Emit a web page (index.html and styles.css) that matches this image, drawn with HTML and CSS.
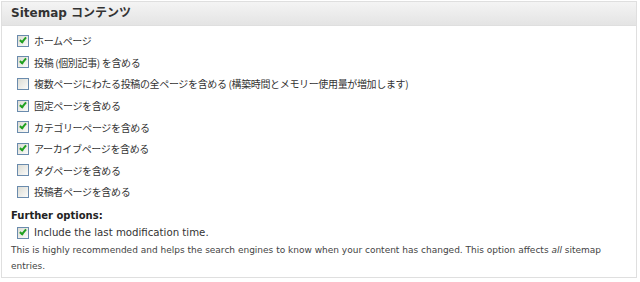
FILE: index.html
```html
<!DOCTYPE html>
<html lang="ja">
<head>
    <meta charset="UTF-8">
    <title>Sitemap コンテンツ</title>
    <link rel="stylesheet" href="styles.css">
</head>
<body>
    <div class="postbox">
        <h3 class="hndle">Sitemap コンテンツ</h3>
        <div class="inside">
            <ul class="options">
                <li><span class="cb checked"></span>ホームページ</li>
                <li><span class="cb checked"></span>投稿 (個別記事) を含める</li>
                <li><span class="cb"></span>複数ページにわたる投稿の全ページを含める (構築時間とメモリー使用量が増加します)</li>
                <li><span class="cb checked"></span>固定ページを含める</li>
                <li><span class="cb checked"></span>カテゴリーページを含める</li>
                <li><span class="cb checked"></span>アーカイブページを含める</li>
                <li><span class="cb"></span>タグページを含める</li>
                <li><span class="cb"></span>投稿者ページを含める</li>
            </ul>
            <div class="further">
                <b>Further options:</b>
                <div class="further-item"><span class="cb checked"></span>Include the last modification time.</div>
                <p class="note">This is highly recommended and helps the search engines to know when your content has changed. This option affects <i>all</i> sitemap entries.</p>
            </div>
        </div>
    </div>
</body>
</html>
```

FILE: styles.css
```css
body {
    margin: 0;
    padding: 1px 3px 0 1px;
    background: #fff;
    font-family: "DejaVu Sans", Verdana, sans-serif;
    color: #333;
}

.postbox {
    border: 1px solid #dfdfdf;
    height: 277px;
    box-sizing: border-box;
}

.hndle {
    margin: 0;
    height: 23px;
    line-height: 23px;
    padding: 0 9px;
    font-size: 12px;
    font-weight: bold;
    color: #333;
    background: linear-gradient(#f4f4f4, #e4e4e4);
    border-bottom: 1px solid #dfdfdf;
    font-family: "DejaVu Sans", "Noto Sans CJK JP", sans-serif;
}

.inside {
    padding: 0 9px;
}

.options {
    list-style: none;
    margin: 0;
    padding: 4px 0 0 6px;
}

.options li {
    height: 21.6px;
    display: flex;
    align-items: center;
    font-size: 10px;
    letter-spacing: -0.35px;
    color: #333;
    font-family: "Noto Sans CJK JP", sans-serif;
}

.cb {
    display: inline-block;
    width: 10px;
    height: 10px;
    border: 1px solid #6a8bad;
    background: linear-gradient(135deg, #dcdcd4, #fbfbfa);
    margin-right: 5px;
    flex: none;
    position: relative;
}

.cb.checked::after {
    content: "";
    position: absolute;
    left: 3px;
    top: 0px;
    width: 2px;
    height: 5px;
    border: solid #1fa01f;
    border-width: 0 2px 2px 0;
    transform: rotate(40deg);
}

.further {
    margin-top: 7px;
}

.further b {
    display: block;
    font-size: 10px;
    color: #222;
}

.further-item {
    display: flex;
    align-items: center;
    padding-left: 6px;
    margin-top: 6px;
    font-size: 10.2px;
    color: #333;
}

.note {
    margin: 3px 0 0;
    font-size: 9px;
    line-height: 16px;
    color: #444;
}
```
